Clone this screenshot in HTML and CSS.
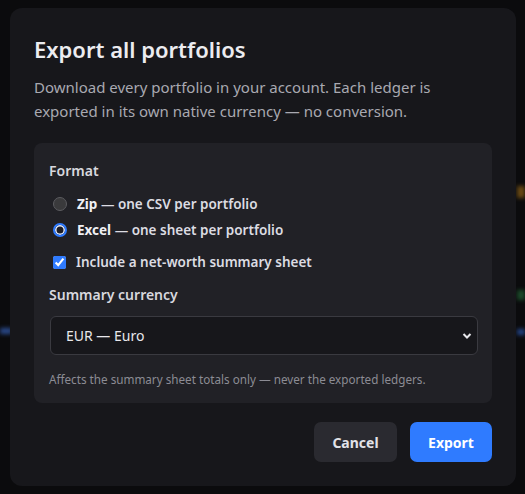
FILE: index.html
```html
<!DOCTYPE html>
<html lang="en">
<head>
    <meta charset="UTF-8">
    <meta name="viewport" content="width=device-width, initial-scale=1.0">
    <title>Export all portfolios</title>
    <link rel="stylesheet" href="styles.css">
</head>
<body>
    <div class="backdrop">
        <span class="glow glow-blue-left"></span>
        <span class="glow glow-orange"></span>
        <span class="glow glow-green"></span>
        <span class="glow glow-blue-right"></span>
    </div>

    <div class="dialog">
        <h1 class="dialog-title">Export all portfolios</h1>
        <p class="dialog-desc">Download every portfolio in your account. Each ledger is exported in its own native currency — no conversion.</p>

        <div class="panel">
            <div class="panel-label">Format</div>

            <label class="option">
                <input type="radio" name="format" value="zip">
                <span><b>Zip</b> — one CSV per portfolio</span>
            </label>
            <label class="option">
                <input type="radio" name="format" value="xlsx" checked>
                <span><b>Excel</b> — one sheet per portfolio</span>
            </label>

            <label class="option option-check">
                <input type="checkbox" checked>
                <span>Include a net-worth summary sheet</span>
            </label>

            <div class="panel-label label-currency">Summary currency</div>
            <select class="currency-select">
                <option>EUR — Euro</option>
                <option>USD — US Dollar</option>
                <option>GBP — British Pound</option>
            </select>
            <div class="hint">Affects the summary sheet totals only — never the exported ledgers.</div>
        </div>

        <div class="actions">
            <button class="btn btn-cancel">Cancel</button>
            <button class="btn btn-export">Export</button>
        </div>
    </div>
</body>
</html>
```

FILE: styles.css
```css
* {
  box-sizing: border-box;
}
html, body {
  margin: 0;
  height: 100%;
}
body {
  background-color: #0b0b0d;
  font-family: "Noto Sans", "Open Sans", sans-serif;
  color: #e8e8ec;
  padding: 8px 9px 0 10px;
  overflow: hidden;
}
.backdrop {
  position: absolute;
  inset: 0;
  z-index: 0;
}
.glow {
  position: absolute;
  height: 6px;
  filter: blur(2px);
}
.glow-blue-left {
  left: 0;
  top: 328px;
  width: 12px;
  background-color: #2a4a8c;
}
.glow-orange {
  right: 0;
  top: 186px;
  width: 8px;
  height: 12px;
  background-color: #6a4a14;
}
.glow-green {
  right: 0;
  top: 290px;
  width: 8px;
  height: 10px;
  background-color: #1c4a2a;
}
.glow-blue-right {
  right: 0;
  top: 329px;
  width: 8px;
  background-color: #24468a;
}

.dialog {
  position: relative;
  z-index: 1;
  width: 506px;
  height: 478px;
  background-color: #17171b;
  border-radius: 12px;
  padding: 24px 24px 0 24px;
}
.dialog-title {
  margin: 0;
  font-size: 22px;
  font-weight: 600;
  line-height: 34px;
  color: #ececf0;
}
.dialog-desc {
  margin: 9px 0 20px 0;
  font-size: 15px;
  line-height: 24px;
  color: #a9a9b1;
}

.panel {
  background-color: #212126;
  border-radius: 8px;
  padding: 16px 15px 15px 15px;
}
.panel-label {
  font-size: 14px;
  font-weight: 600;
  line-height: 24px;
  color: #d8d8de;
  margin-bottom: 8px;
}
.label-currency {
  margin-top: 8px;
  margin-bottom: 9px;
}
.option {
  display: flex;
  align-items: center;
  gap: 10px;
  font-size: 13.5px;
  line-height: 20px;
  color: #dcdce2;
  font-weight: 600;
  padding-left: 4px;
  height: 26px;
}
.option b {
  font-weight: 700;
  color: #f0f0f4;
}
.option input {
  margin: 0;
  width: 13px;
  height: 13px;
  accent-color: #2f7bff;
}
.option input[type="radio"] {
  appearance: none;
  width: 14px;
  height: 14px;
  border-radius: 50%;
  background-color: #3a3a3c;
  border: 1px solid #5c5c60;
}
.option input[type="radio"]:checked {
  background-color: #1c1c24;
  border: 2.5px solid #2f7bff;
  box-shadow: inset 0 0 0 1.5px #e6ecfa;
}
.option-check {
  margin-top: 6px;
}

.currency-select {
  display: block;
  width: 100%;
  height: 39px;
  margin-left: 1px;
  background-color: #17171b;
  color: #e8e8ec;
  border: 1px solid #3a3a40;
  border-radius: 6px;
  padding: 0 10px 0 15px;
  font-family: inherit;
  font-size: 14px;
  appearance: none;
  background-image: url("data:image/svg+xml,%3Csvg xmlns='http://www.w3.org/2000/svg' width='10' height='8' viewBox='0 0 10 8'%3E%3Cpath d='M1.5 2 L5 5.5 L8.5 2' fill='none' stroke='%23e8e8ec' stroke-width='2'/%3E%3C/svg%3E");
  background-repeat: no-repeat;
  background-position: right 5px center;
}
.hint {
  margin-top: 15px;
  font-size: 11.7px;
  line-height: 18px;
  color: #8c8c94;
}

.actions {
  display: flex;
  justify-content: flex-end;
  gap: 13px;
  margin-top: 19px;
}
.btn {
  height: 40px;
  border: none;
  border-radius: 7px;
  font-family: inherit;
  font-size: 14px;
  font-weight: 700;
  cursor: pointer;
}
.btn-cancel {
  width: 83px;
  background-color: #2a2a30;
  color: #e2e2e8;
}
.btn-export {
  width: 82px;
  background-color: #2f7bff;
  color: #ffffff;
}
```
